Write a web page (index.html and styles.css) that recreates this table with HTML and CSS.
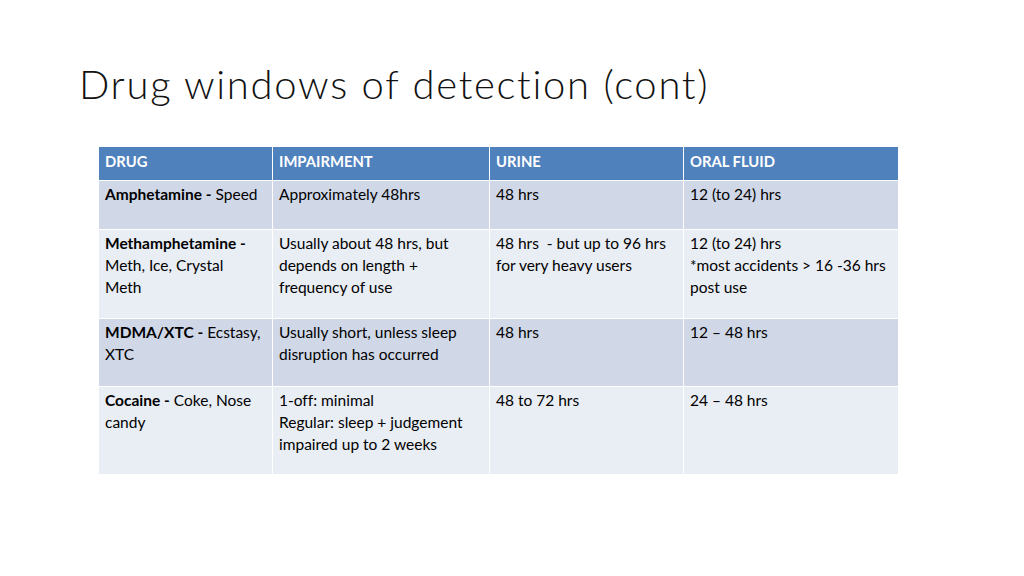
FILE: index.html
```html
<!DOCTYPE html>
<html>
<head>
<meta charset="utf-8">
<link rel="stylesheet" href="styles.css">
</head>
<body>
<div class="slide">
  <h1 class="title">Drug windows of detection (cont)</h1>
  <table class="grid">
    <colgroup>
      <col class="c1"><col class="c2"><col class="c3"><col class="c4">
    </colgroup>
    <thead>
      <tr class="head">
        <th>DRUG</th><th>IMPAIRMENT</th><th>URINE</th><th>ORAL FLUID</th>
      </tr>
    </thead>
    <tbody>
      <tr class="odd r1">
        <td><b>Amphetamine -</b> Speed</td>
        <td>Approximately 48hrs</td>
        <td>48 hrs</td>
        <td>12 (to 24) hrs</td>
      </tr>
      <tr class="even r2">
        <td><b>Methamphetamine -</b><br>Meth, Ice, Crystal<br>Meth</td>
        <td>Usually about 48 hrs, but<br>depends on length +<br>frequency of use</td>
        <td>48 hrs&nbsp; - but up to 96 hrs<br>for very heavy users</td>
        <td>12 (to 24) hrs<br>*most accidents &gt; 16 -36 hrs<br>post use</td>
      </tr>
      <tr class="odd r3">
        <td><b>MDMA/XTC -</b> Ecstasy,<br>XTC</td>
        <td>Usually short, unless sleep<br>disruption has occurred</td>
        <td>48 hrs</td>
        <td>12 – 48 hrs</td>
      </tr>
      <tr class="even r4">
        <td><b>Cocaine -</b> Coke, Nose<br>candy</td>
        <td>1-off: minimal<br>Regular: sleep + judgement<br>impaired up to 2 weeks</td>
        <td>48 to 72 hrs</td>
        <td>24 – 48 hrs</td>
      </tr>
    </tbody>
  </table>
</div>
</body>
</html>
```

FILE: styles.css
```css
* { box-sizing: border-box; }
html, body { margin: 0; padding: 0; background: #ffffff; }
.slide {
  width: 1024px;
  height: 576px;
  padding: 58px 0 0 0;
  font-family: Lato, "Open Sans", sans-serif;
  font-variant-ligatures: none;
  color: #000;
}
.title {
  margin: 0 0 0 79px;
  font-family: Lato, sans-serif;
  font-weight: 300;
  font-size: 40px;
  line-height: 52px;
  letter-spacing: 1.7px;
  color: #111;
}
.grid {
  margin: 36px 0 0 98px;
  border-collapse: collapse;
  table-layout: fixed;
  width: 800px;
  font-size: 15.5px;
}
.c1 { width: 174px; }
.c2 { width: 217px; }
.c3 { width: 194px; }
.c4 { width: 215px; }
.grid th, .grid td {
  border: 1.5px solid #ffffff;
  text-align: left;
  vertical-align: top;
  padding: 2px 6px 0 6px;
  line-height: 22px;
  white-space: nowrap;
}
.head th {
  background: #4f81bd;
  color: #ffffff;
  font-weight: 700;
  font-size: 14.8px;
  height: 34px;
  padding-top: 3px;
}
.odd td { background: #d0d8e8; }
.even td { background: #e9edf4; }
.r1 td { height: 49px; }
.r2 td { height: 89px; }
.r3 td { height: 68px; }
.r4 td { height: 88px; }
.grid b { font-weight: 700; }
```
